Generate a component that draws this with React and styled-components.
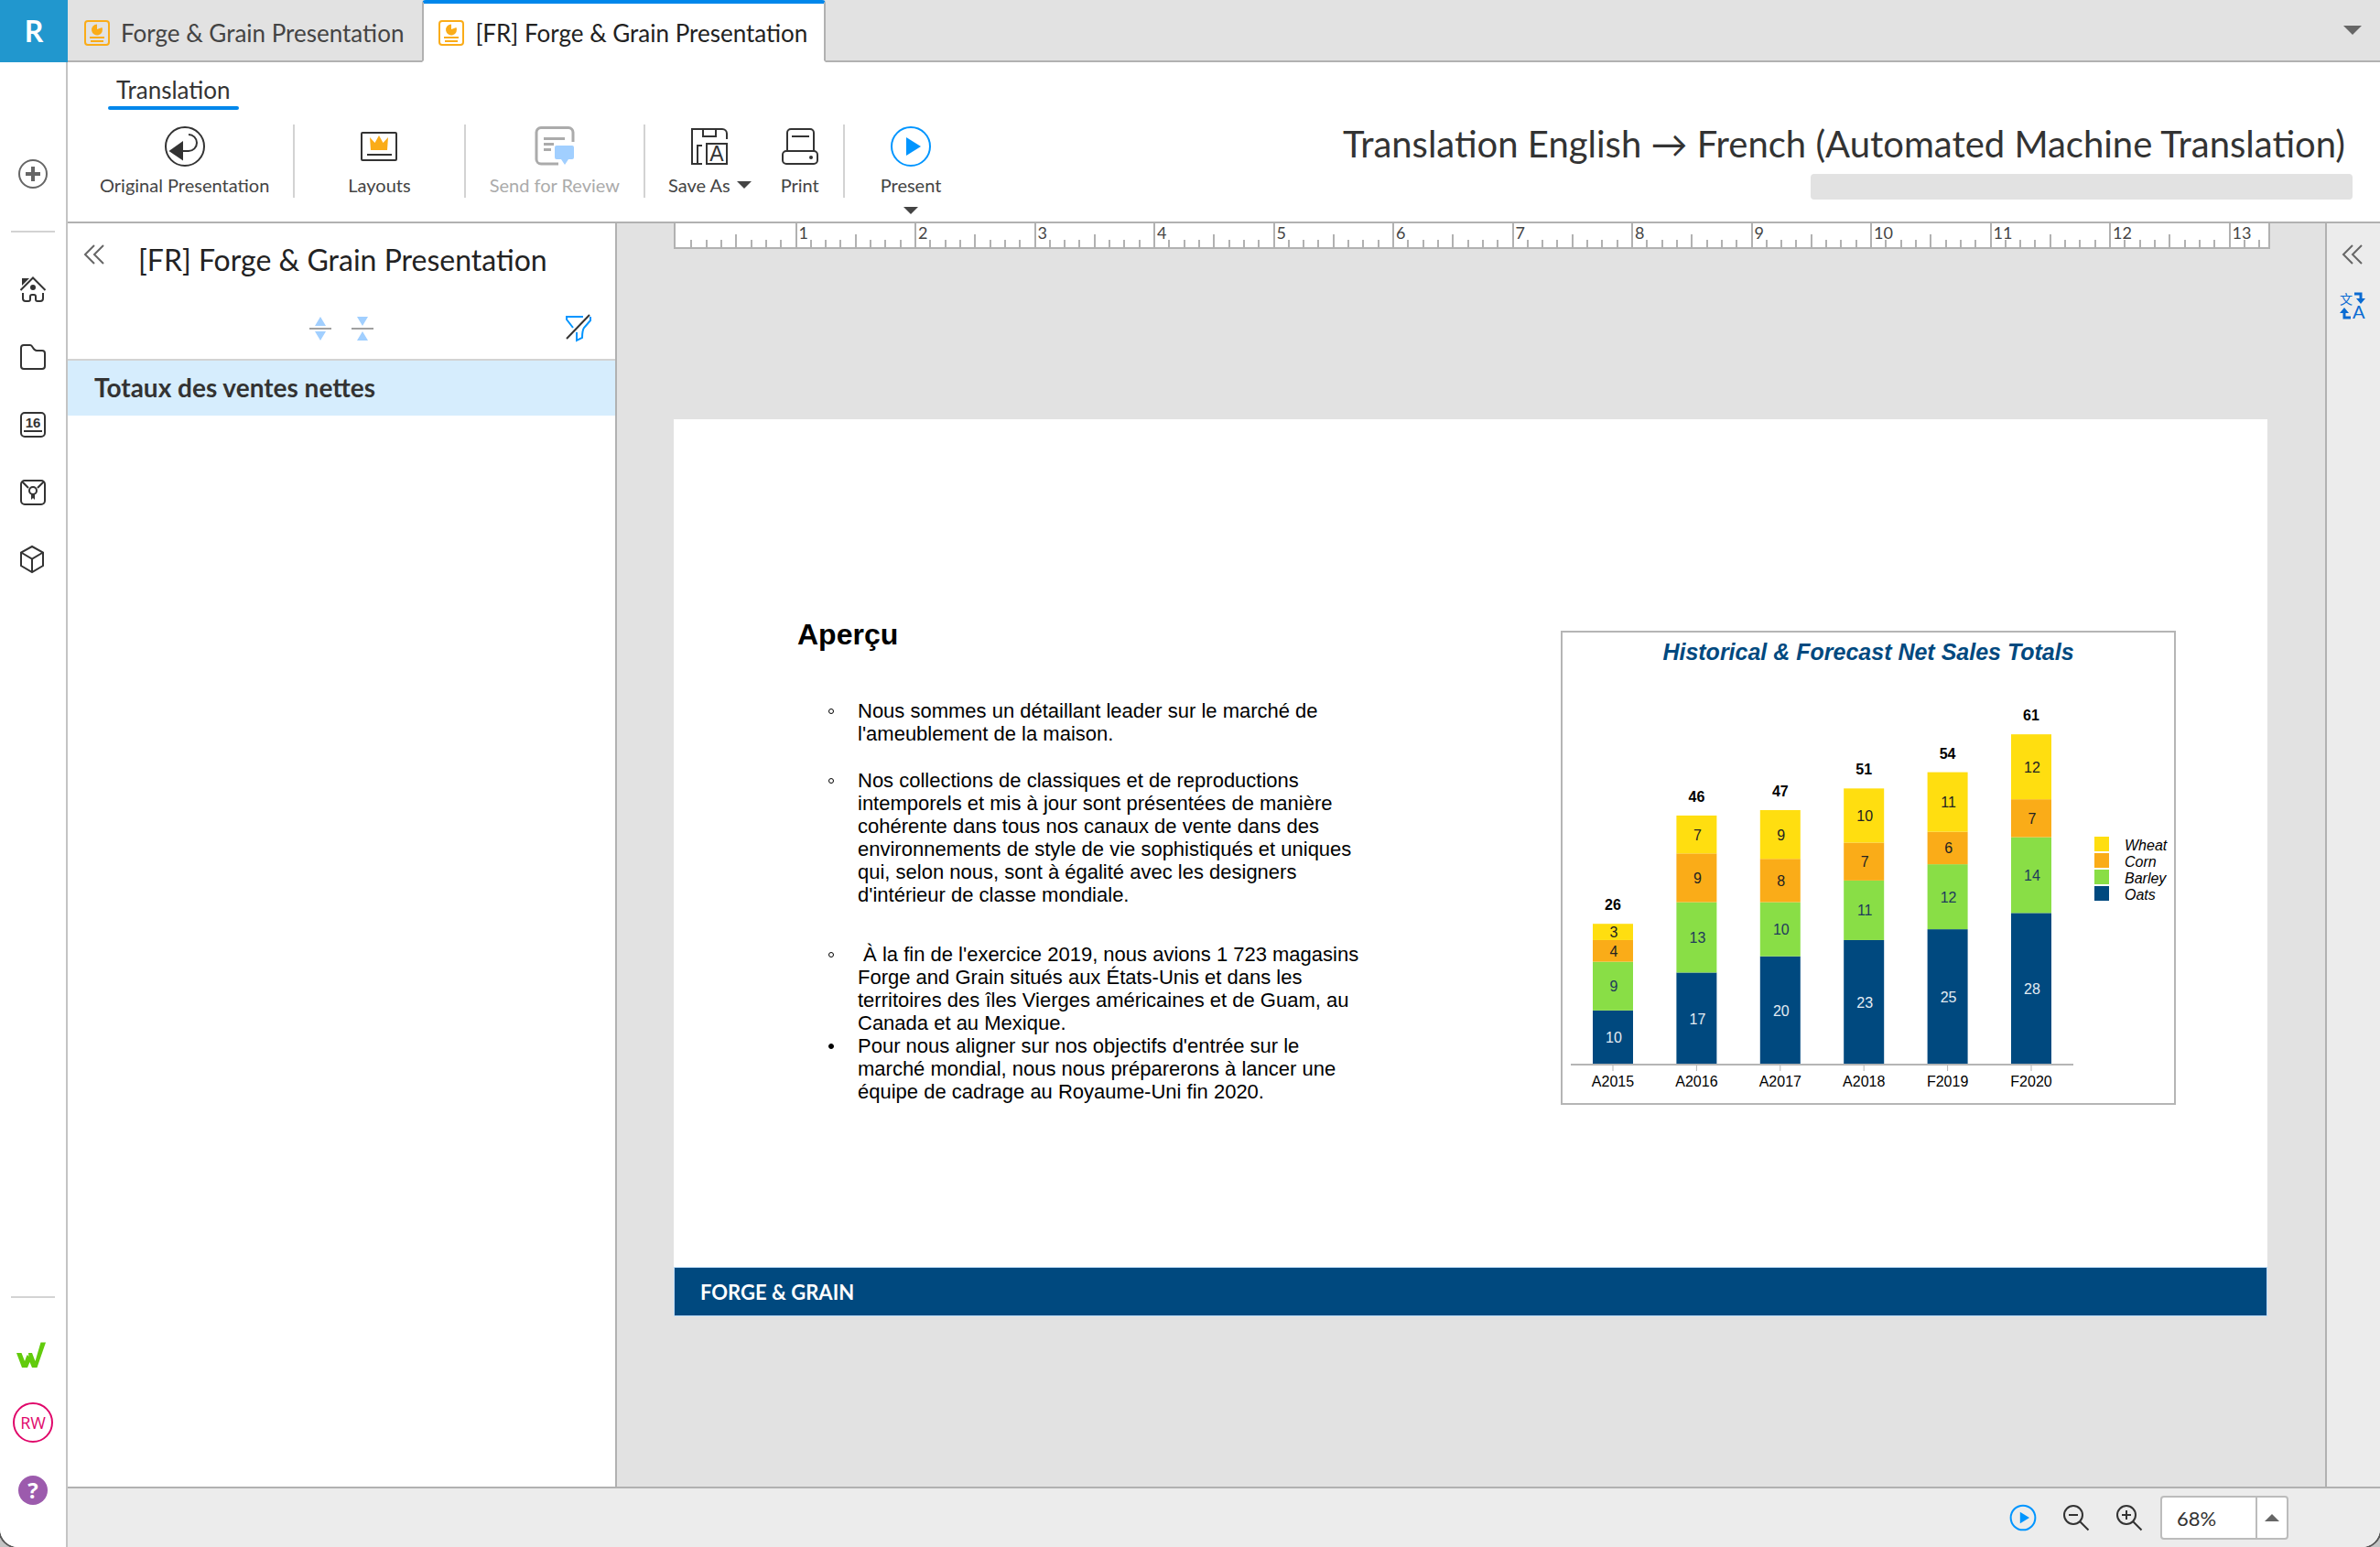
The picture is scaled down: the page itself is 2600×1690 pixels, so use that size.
import React, { useState } from "react";
import styled, { createGlobalStyle } from "styled-components";

const GlobalStyle = createGlobalStyle`
  *, *::before, *::after {
    box-sizing: border-box;
  }
  body {
    margin: 0;
    background: #c4c4c4;
    color: #333;
    font-family: Lato, "Liberation Sans", sans-serif;
  }
  button, input {
    font: inherit;
    color: inherit;
  }
  h1, h2, p, ul, figure {
    margin: 0;
    padding: 0;
  }
  svg {
    display: block;
    flex: none;
    overflow: visible;
  }
`;

/* ---------- icons ---------- */

const Icon = ({ w, h = w, stroke = "#333", sw = 2, children }) => (
  <svg
    width={w}
    height={h}
    viewBox={`0 0 ${w} ${h}`}
    fill="none"
    stroke={stroke}
    strokeWidth={sw}
    aria-hidden="true"
  >
    {children}
  </svg>
);

const PresentationIcon = () => (
  <Icon w={28} stroke="#faac18">
    <rect x="1" y="1" width="26" height="26" rx="3" />
    <path d="M14 4.500V10l5.500-2a6 6 0 1 1-5.500-3.500z" fill="#faac18" stroke="none" />
    <path d="M6 19h16M7 23h14" />
  </Icon>
);

const Caret = ({ w = 16, h = 8, up, fill = "#444" }) => (
  <Icon w={w} h={h} stroke="none">
    <path d={up ? `M0 ${h}H${w}L${w / 2} 0z` : `M0 0H${w}L${w / 2} ${h}z`} fill={fill} />
  </Icon>
);

const ChevronsLeft = () => (
  <Icon w={24} h={22} stroke="#666">
    <path d="M12 1L2 11l10 10M22 1L12 11l10 10" />
  </Icon>
);

const AddIcon = () => (
  <Icon w={32} stroke="#666">
    <circle cx="16" cy="16" r="15" />
    <path d="M16 8v16M8 16h16" strokeWidth="4" />
  </Icon>
);

const HomeIcon = () => (
  <Icon w={28}>
    <path d="M.5 15L14 1.500 27.500 15" />
    <path d="M2 2h8l-8 8z" fill="#333" stroke="none" />
    <circle cx="14" cy="12" r="3" fill="#333" stroke="none" />
    <path d="M3 18v6a3 3 0 0 0 3 3h3a2 2 0 0 0 2-2v-3a2 2 0 0 1 2-2h2a2 2 0 0 1 2 2v3a2 2 0 0 0 2 2h3a3 3 0 0 0 3-3v-6" />
  </Icon>
);

const FolderIcon = () => (
  <Icon w={28}>
    <path d="M1 4a3 3 0 0 1 3-3h7c3 0 3 6 7 6h6a3 3 0 0 1 3 3v14a3 3 0 0 1-3 3H4a3 3 0 0 1-3-3z" />
  </Icon>
);

const CalendarIcon = () => (
  <Icon w={28}>
    <rect x="1" y="1" width="26" height="26" rx="4" />
    <text
      x="14"
      y="17"
      textAnchor="middle"
      fill="#333"
      stroke="none"
      fontFamily="Liberation Sans, sans-serif"
      fontWeight="700"
      fontSize="15"
    >
      16
    </text>
    <path d="M4 21h20" />
  </Icon>
);

const CertificateIcon = () => (
  <Icon w={28}>
    <rect x="1" y="1" width="26" height="26" rx="4" />
    <path d="M2 2l7 7M26 2l-7 7" />
    <circle cx="14" cy="12" r="4" />
    <path d="M12 16h4v6l-2-2-2 2z" fill="#333" stroke="none" />
  </Icon>
);

const CubeIcon = () => (
  <Icon w={28}>
    <path d="M13-1l12 6.500v14.500L13 27 1 20V5.500zM1 5.500L13 12.500l12-7M13 12.500V27" />
  </Icon>
);

const WLogo = () => (
  <Icon w={36} h={28} stroke="none">
    <path
      d="M0 12H5.500L9 21l2-5.500 1-1.500 1.500 2-.5-4H17l3.500 9L26.500.5H32L22.500 28H17l-2.500-6-2.500 6H6z"
      fill="#62cb0c"
    />
  </Icon>
);

const OriginalIcon = () => (
  <Icon w={44}>
    <circle cx="22" cy="22" r="21" />
    <path d="M26 9a9 9 0 0 1 0 18h-7" />
    <path d="M4.500 27L20 16v21.500z" fill="#333" stroke="none" />
  </Icon>
);

const LayoutsIcon = () => (
  <Icon w={44}>
    <rect x="3" y="7" width="38" height="30" rx="1" />
    <path d="M12 12l5.500 6L22 10l4.500 8 5.500-6-1 14H13z" fill="#faac18" stroke="none" />
    <path d="M9 31h27" />
  </Icon>
);

const ReviewIcon = () => (
  <Icon w={44} stroke="#ababab" sw={3}>
    <path d="M26 41H7a5 5 0 0 1-5-5V6.500a5 5 0 0 1 5-5h30a5 5 0 0 1 5 5V17" />
    <path d="M10 13.500h23M10 19.500h11M10 25.500h8" />
    <path
      d="M24 21h17a2 2 0 0 1 2 2v11a2 2 0 0 1-2 2h-4l-4 6-4-6h-5a2 2 0 0 1-2-2V23a2 2 0 0 1 2-2z"
      fill="#a1cfff"
      stroke="none"
    />
  </Icon>
);

const SaveAsIcon = () => (
  <Icon w={44}>
    <g transform="translate(2 2)">
      <path d="M12 39H1V1h33a5 5 0 0 1 5 5v6M13 1v8h14V1M12 19H7v20" />
      <rect x="17" y="17" width="22" height="22" />
      <text
        x="28"
        y="36"
        textAnchor="middle"
        fill="#333"
        stroke="none"
        fontFamily="Liberation Sans, sans-serif"
        fontSize="23"
      >
        A
      </text>
    </g>
  </Icon>
);

const PrintIcon = () => (
  <Icon w={44}>
    <g transform="translate(2 2)">
      <path d="M6 25V5a4 4 0 0 1 4-4h21a4 4 0 0 1 4 4v20M11 9h19" />
      <rect x="1" y="25" width="38" height="14" rx="4" />
      <circle cx="32" cy="32" r="2" fill="#333" stroke="none" />
    </g>
  </Icon>
);

const PlayIcon = ({ size = 44 }) => (
  <svg width={size} height={size} viewBox="0 0 44 44" fill="none" aria-hidden="true">
    <circle cx="22" cy="22" r="21" stroke="#0095ff" strokeWidth={88 / size} />
    <path d="M17 12l16 10-16 10z" fill="#0095ff" />
  </svg>
);

const SpreadIcon = ({ collapse }) => (
  <Icon w={24} h={26} stroke="#a0a0a0">
    <path d="M0 13h24" />
    <path
      d={collapse ? "M6 0h12l-6 10zM6 26h12l-6-10z" : "M6 10h12L12 0zM6 16h12l-6 10z"}
      fill="#a1cfff"
      stroke="none"
    />
  </Icon>
);

const FilterOffIcon = () => (
  <Icon w={30} stroke="#0095ff">
    <path d="M20 2H2v3l7 9M28 2v4l-7 8c-2 3-2 5-2 11l-6 3v-9" />
    <path d="M2 26L27 0" stroke="#333" />
  </Icon>
);

const TranslateIcon = () => (
  <Icon w={28} stroke="#0a6bd2">
    <text
      x="0"
      y="12"
      fontFamily="Noto Sans CJK SC, sans-serif"
      fontSize="14"
      fill="#0a6bd2"
      stroke="none"
    >
      文
    </text>
    <text
      x="14"
      y="28"
      fontFamily="Lato, sans-serif"
      fontSize="20"
      fill="#0a6bd2"
      stroke="none"
    >
      A
    </text>
    <path d="M16 1h7v6M12 27H5v-6" strokeWidth="3" />
    <path d="M18 6h10l-5 6zM0 22h10l-5-6z" fill="#0a6bd2" stroke="none" />
  </Icon>
);

const ZoomIcon = ({ plus }) => (
  <Icon w={28}>
    <circle cx="11" cy="11" r="10" />
    <path d="M18 18l9.500 9.500M6 11h10" />
    {plus && <path d="M11 6v10" />}
  </Icon>
);

/* ---------- data ---------- */

const bullets = [
  {
    hollow: true,
    lines: ["Nous sommes un détaillant leader sur le marché de", "l'ameublement de la maison."],
    after: 26,
  },
  {
    hollow: true,
    lines: [
      "Nos collections de classiques et de reproductions",
      "intemporels et mis à jour sont présentées de manière",
      "cohérente dans tous nos canaux de vente dans des",
      "environnements de style de vie sophistiqués et uniques",
      "qui, selon nous, sont à égalité avec les designers",
      "d'intérieur de classe mondiale.",
    ],
    after: 40,
  },
  {
    hollow: true,
    lines: [
      "\u00a0À la fin de l'exercice 2019, nous avions 1 723 magasins",
      "Forge and Grain situés aux États-Unis et dans les",
      "territoires des îles Vierges américaines et de Guam, au",
      "Canada et au Mexique.",
    ],
    after: 0,
  },
  {
    hollow: false,
    lines: [
      "Pour nous aligner sur nos objectifs d'entrée sur le",
      "marché mondial, nous nous préparerons à lancer une",
      "équipe de cadrage au Royaume-Uni fin 2020.",
    ],
    after: 0,
  },
];

const series = [
  { name: "Oats", color: "#00497f", label: "#e4ecf3" },
  { name: "Barley", color: "#89de46", label: "#1f3a5c" },
  { name: "Corn", color: "#faac18", label: "#222" },
  { name: "Wheat", color: "#ffde10", label: "#222" },
];

const sales = [
  { year: "A2015", values: [10, 9, 4, 3] },
  { year: "A2016", values: [17, 13, 9, 7] },
  { year: "A2017", values: [20, 10, 8, 9] },
  { year: "A2018", values: [23, 11, 7, 10] },
  { year: "F2019", values: [25, 12, 6, 11] },
  { year: "F2020", values: [28, 14, 7, 12] },
];

const BASE = 474;
const UNIT = 5.915;

const SalesChart = () => (
  <ChartSvg viewBox="0 0 672 518" role="img" aria-label="Historical & Forecast Net Sales Totals">
    <rect x="1" y="1" width="670" height="516" fill="#fff" stroke="#b5b5b5" strokeWidth="2" />
    <text className="title" x="336" y="32">
      Historical &amp; Forecast Net Sales Totals
    </text>
    {sales.map(({ year, values }, i) => {
      const cx = 57 + i * 91.4;
      const total = values.reduce((a, b) => a + b, 0);
      let sum = 0;
      return (
        <g key={year}>
          {values.map((v, s) => {
            sum += v;
            const y = BASE - sum * UNIT;
            return (
              <g key={series[s].name}>
                <rect x={cx - 22} y={y} width="44" height={v * UNIT} fill={series[s].color} />
                <text x={cx + 1} y={y + (v * UNIT) / 2 + 6} fill={series[s].label}>
                  {v}
                </text>
              </g>
            );
          })}
          <text className="total" x={cx} y={BASE - total * UNIT - 15}>
            {total}
          </text>
          <path d={`M${cx} ${BASE}v7`} stroke="#b5b5b5" strokeWidth="1" />
          <text x={cx} y="498">
            {year}
          </text>
        </g>
      );
    })}
    <path d={`M11 ${BASE}H560`} stroke="#b5b5b5" strokeWidth="2" />
    {[...series].reverse().map((s, i) => (
      <g key={s.name}>
        <rect x="583" y={225 + i * 18} width="16" height="16" fill={s.color} />
        <text className="legend" x="616" y={240 + i * 18}>
          {s.name}
        </text>
      </g>
    ))}
  </ChartSvg>
);

// thirteen full inches and the first third of the fourteenth
const Ruler = () => (
  <RulerBar>
    {Array.from({ length: 14 }, (_, n) => {
      const last = n === 13;
      return (
        <Inch key={n} $grow={last ? 8 : 24}>
          <Ticks>
            {Array.from({ length: last ? 3 : 8 }, (_, t) => (
              <Tick
                key={t}
                $grow={last && t === 2 ? 2 : 3}
                $h={t === 0 ? (n === 0 ? 0 : 26) : t === 4 ? 14 : 8}
              />
            ))}
          </Ticks>
          {n > 0 && <InchLabel>{n}</InchLabel>}
        </Inch>
      );
    })}
  </RulerBar>
);

const App = () => {
  const [zoom, setZoom] = useState("68%");

  return (
    <>
      <GlobalStyle />
      <Window>
        <Sidebar>
          <Brand>R</Brand>
          <AddButton aria-label="Create">
            <AddIcon />
          </AddButton>
          <SideRule />
          <SideNav>
            <PlainButton aria-label="Home"><HomeIcon /></PlainButton>
            <PlainButton aria-label="Files"><FolderIcon /></PlainButton>
            <PlainButton aria-label="Calendar"><CalendarIcon /></PlainButton>
            <PlainButton aria-label="Certifications"><CertificateIcon /></PlainButton>
            <PlainButton aria-label="Data"><CubeIcon /></PlainButton>
          </SideNav>
          <Spacer />
          <SideRule />
          <SideFooter>
            <WLogo />
            <Avatar aria-label="Account">RW</Avatar>
            <Help aria-label="Help">?</Help>
          </SideFooter>
        </Sidebar>

        <Main>
          <TabStrip>
            <Tab>
              <PresentationIcon />
              Forge &amp; Grain Presentation
            </Tab>
            <Tab $active>
              <PresentationIcon />
              [FR] Forge &amp; Grain Presentation
            </Tab>
            <TabMenu aria-label="All tabs">
              <Caret w={20} h={10} fill="#666" />
            </TabMenu>
          </TabStrip>

          <Ribbon>
            <div>
              <RibbonTab>Translation</RibbonTab>
              <Toolbar>
                <ToolGroup $pad={26}>
                  <ToolButton>
                    <OriginalIcon />
                    Original Presentation
                  </ToolButton>
                </ToolGroup>
                <ToolGroup $pad={58}>
                  <ToolButton>
                    <LayoutsIcon />
                    Layouts
                  </ToolButton>
                </ToolGroup>
                <ToolGroup $pad={26}>
                  <ToolButton disabled>
                    <ReviewIcon />
                    Send for Review
                  </ToolButton>
                </ToolGroup>
                <ToolGroup $pad={25}>
                  <ToolButton>
                    <SaveAsIcon />
                    <LabelRow>
                      Save As <Caret />
                    </LabelRow>
                  </ToolButton>
                  <ToolButton>
                    <PrintIcon />
                    Print
                  </ToolButton>
                </ToolGroup>
                <ToolGroup $pad={39} $last>
                  <ToolButton>
                    <PlayIcon />
                    Present
                    <CaretBelow>
                      <Caret />
                    </CaretBelow>
                  </ToolButton>
                </ToolGroup>
              </Toolbar>
            </div>
            <RibbonTitle>
              <h1>Translation English → French (Automated Machine Translation)</h1>
              <Placeholder />
            </RibbonTitle>
          </Ribbon>

          <Workspace>
            <Outline>
              <OutlineHead>
                <PlainButton aria-label="Collapse outline"><ChevronsLeft /></PlainButton>
                <h2>[FR] Forge &amp; Grain Presentation</h2>
              </OutlineHead>
              <OutlineTools>
                <PlainButton aria-label="Expand all"><SpreadIcon /></PlainButton>
                <PlainButton aria-label="Collapse all"><SpreadIcon collapse /></PlainButton>
                <FilterButton aria-label="Clear filter"><FilterOffIcon /></FilterButton>
              </OutlineTools>
              <OutlineRow>Totaux des ventes nettes</OutlineRow>
            </Outline>

            <Canvas>
              <Ruler />
              <Stage>
                <Slide>
                  <SlideBody>
                    <SlideText>
                      <h2>Aperçu</h2>
                      <ul>
                        {bullets.map((b) => (
                          <Bullet key={b.lines[0]} $hollow={b.hollow} $after={b.after}>
                            <div>
                              {b.lines.map((line) => (
                                <p key={line}>{line}</p>
                              ))}
                            </div>
                          </Bullet>
                        ))}
                      </ul>
                    </SlideText>
                    <SalesChart />
                  </SlideBody>
                  <SlideFooter>FORGE &amp; GRAIN</SlideFooter>
                </Slide>
              </Stage>
            </Canvas>

            <Rail>
              <PlainButton aria-label="Expand panel"><ChevronsLeft /></PlainButton>
              <PlainButton aria-label="Translation"><TranslateIcon /></PlainButton>
            </Rail>
          </Workspace>

          <StatusBar>
            <PlainButton aria-label="Present"><PlayIcon size={28} /></PlainButton>
            <PlainButton aria-label="Zoom out"><ZoomIcon /></PlainButton>
            <PlainButton aria-label="Zoom in"><ZoomIcon plus /></PlainButton>
            <ZoomBox>
              <input aria-label="Zoom" value={zoom} onChange={(e) => setZoom(e.target.value)} />
              <button aria-label="Zoom levels"><Caret up fill="#666" /></button>
            </ZoomBox>
          </StatusBar>
        </Main>
      </Window>
    </>
  );
};

export default App;

/* ---------- frame ---------- */

const Window = styled.div`
  display: flex;
  min-height: 100vh;
  background: #fff;
  border-radius: 0 0 20px 20px;
  box-shadow: 0 0 0 2px #555;
  overflow: hidden;
`;

const PlainButton = styled.button`
  display: flex;
  padding: 0;
  border: 0;
  background: none;
  cursor: pointer;
`;

const Spacer = styled.div`
  flex: 1;
`;

const Sidebar = styled.nav`
  display: flex;
  flex-direction: column;
  align-items: center;
  flex: none;
  width: 74px;
  border-right: 2px solid #c4c4c4;
  background: #fff;
`;

const Brand = styled.div`
  align-self: flex-start;
  width: 74px;
  height: 68px;
  margin-right: -2px;
  background: #2197ce;
  color: #fff;
  font-size: 32px;
  font-weight: 700;
  line-height: 68px;
  text-align: center;
`;

const AddButton = styled(PlainButton)`
  margin: 106px 0 46px;
`;

const SideRule = styled.div`
  width: 48px;
  height: 2px;
  background: #d3d3d3;
`;

const SideNav = styled.div`
  display: flex;
  flex-direction: column;
  align-items: center;
  gap: 46px;
  padding-top: 48px;
`;

const SideFooter = styled.div`
  display: flex;
  flex-direction: column;
  align-items: center;
  padding: 48px 0 46px;
`;

const Avatar = styled(PlainButton)`
  justify-content: center;
  align-items: center;
  width: 44px;
  height: 44px;
  margin: 38px 0 36px;
  border: 2px solid #e0066a;
  border-radius: 50%;
  color: #e0066a;
  font-family: "Open Sans", sans-serif;
  font-size: 18px;
`;

const Help = styled(PlainButton)`
  justify-content: center;
  align-items: center;
  width: 32px;
  height: 32px;
  border-radius: 50%;
  background: #9c5bad;
  color: #fff;
  font-family: "Open Sans", sans-serif;
  font-size: 24px;
  font-weight: 700;
  line-height: 32px;
`;

const Main = styled.div`
  display: flex;
  flex-direction: column;
  flex: 1;
  min-width: 0;
`;

/* ---------- tabs and ribbon ---------- */

const TabStrip = styled.div`
  display: flex;
  height: 68px;
  background: #e2e2e2;
`;

const Tab = styled.button`
  display: flex;
  align-items: center;
  gap: 12px;
  padding: ${(p) => (p.$active ? "2px 18px 0 16px" : "6px 20px 0 18px")};
  border: 0;
  background: ${(p) => (p.$active ? "#fff" : "#e2e2e2")};
  border-bottom: 2px solid ${(p) => (p.$active ? "#fff" : "#b1b1b1")};
  color: ${(p) => (p.$active ? "#222" : "#444")};
  font-size: 26px;
  line-height: 32px;
  white-space: nowrap;
  ${(p) =>
    p.$active &&
    `
    border-top: 4px solid #0087eb;
    border-left: 2px solid #b1b1b1;
    border-right: 2px solid #b1b1b1;
    border-radius: 4px 4px 0 0;
  `}
`;

const TabMenu = styled.button`
  display: flex;
  justify-content: flex-end;
  align-items: center;
  flex: 1;
  padding: 0 20px 0 0;
  border: 0;
  border-bottom: 2px solid #b1b1b1;
  background: none;
`;

const Ribbon = styled.header`
  display: flex;
  justify-content: space-between;
  height: 176px;
  border-bottom: 2px solid #b1b1b1;
  background: #fff;
`;

const RibbonTab = styled.button`
  display: block;
  margin: 14px 0 16px 44px;
  padding: 0 9px 2px;
  border: 0;
  background: none;
  font-size: 26px;
  line-height: 32px;

  &::after {
    content: "";
    display: block;
    height: 4px;
    margin: 2px -9px -2px;
    border-radius: 2px;
    background: #0087eb;
  }
`;

const Toolbar = styled.div`
  display: flex;
  padding-left: 9px;
`;

const ToolGroup = styled.div`
  display: flex;
  gap: 31px;
  height: 80px;
  padding: 2px ${(p) => p.$pad}px 0;
  border-right: ${(p) => (p.$last ? 0 : 2)}px solid #d3d3d3;
`;

const ToolButton = styled.button`
  display: flex;
  flex-direction: column;
  align-items: center;
  gap: 8px;
  padding: 0;
  border: 0;
  background: none;
  color: #444;
  font-size: 20px;
  line-height: 24px;
  white-space: nowrap;

  &:disabled {
    color: #ababab;
  }
`;

const LabelRow = styled.span`
  display: flex;
  align-items: center;
  gap: 7px;
`;

const CaretBelow = styled.span`
  padding-top: 4px;
`;

const RibbonTitle = styled.div`
  display: flex;
  flex-direction: column;
  align-items: flex-end;
  gap: 9px;
  padding: 65px 30px 0 0;

  h1 {
    margin-right: 8px;
    font-size: 40px;
    font-weight: 400;
    line-height: 48px;
    white-space: nowrap;
  }
`;

const Placeholder = styled.div`
  width: 592px;
  height: 28px;
  border-radius: 4px;
  background: #e2e2e2;
`;

/* ---------- workspace ---------- */

const Workspace = styled.div`
  display: flex;
  flex: 1;
`;

const Outline = styled.aside`
  flex: none;
  width: 600px;
  border-right: 2px solid #b1b1b1;
`;

const OutlineHead = styled.div`
  display: flex;
  align-items: flex-start;
  gap: 36px;
  padding: 23px 0 0 17px;

  h2 {
    color: #222;
    font-size: 32px;
    font-weight: 400;
    line-height: 34px;
    white-space: nowrap;
  }
`;

const OutlineTools = styled.div`
  display: flex;
  align-items: center;
  gap: 22px;
  height: 93px;
  padding: 24px 25px 0 264px;
  border-bottom: 2px solid #d3d3d3;
`;

const FilterButton = styled(PlainButton)`
  margin-left: auto;
`;

const OutlineRow = styled.button`
  display: block;
  width: 100%;
  height: 60px;
  padding: 0 0 2px 29px;
  border: 0;
  background: #d6edfd;
  font-size: 28px;
  font-weight: 700;
  text-align: left;
`;

const Canvas = styled.main`
  display: flex;
  flex-direction: column;
  flex: 1;
  min-width: 0;
  padding: 0 60px 0 62px;
  background: #e2e2e2;
`;

const RulerBar = styled.div`
  display: flex;
  height: 28px;
  border: 2px solid #b1b1b1;
  border-top: 0;
  background: #fff;
`;

const Inch = styled.div`
  display: grid;
  flex: ${(p) => p.$grow} 1 0;
  min-width: 0;

  & > * {
    grid-area: 1 / 1;
    min-width: 0;
  }
`;

const Ticks = styled.div`
  display: flex;
  align-items: flex-end;
`;

const Tick = styled.div`
  flex: ${(p) => p.$grow} 1 0;
  height: ${(p) => p.$h}px;
  border-left: 2px solid #b1b1b1;
`;

const InchLabel = styled.span`
  padding-left: 4px;
  color: #444;
  font-size: 18px;
  line-height: 20px;
`;

const Stage = styled.div`
  display: flex;
  flex-direction: column;
  justify-content: center;
  flex: 1;
  padding-right: 3px;
`;

const Slide = styled.section`
  display: flex;
  flex-direction: column;
  aspect-ratio: 16 / 9;
  background: #fff;
  color: #000;
`;

const SlideBody = styled.div`
  display: flex;
  justify-content: space-between;
  align-items: flex-start;
  flex: 1;
  padding: 217px 100px 0 135px;
  font-family: "Liberation Sans", Arial, sans-serif;

  h2 {
    font-size: 32px;
    line-height: 36px;
  }
  ul {
    padding: 53px 0 0 34px;
    list-style: none;
  }
`;

const SlideText = styled.div`
  font-size: 22px;
  line-height: 25px;
  white-space: nowrap;
`;

const Bullet = styled.li`
  display: flex;
  gap: 26px;
  padding-bottom: ${(p) => p.$after}px;

  &::before {
    content: "";
    flex: none;
    width: 6px;
    height: 6px;
    margin-top: 10px;
    border: 1px solid #000;
    border-radius: 50%;
    background: ${(p) => (p.$hollow ? "none" : "#000")};
  }
`;

const ChartSvg = styled.svg`
  width: 672px;
  margin-top: 14px;

  text {
    font-size: 16px;
    text-anchor: middle;
  }
  .title {
    fill: #00497f;
    font-size: 25px;
    font-style: italic;
    font-weight: 700;
  }
  .total {
    font-weight: 700;
  }
  .legend {
    font-style: italic;
    text-anchor: start;
  }
`;

const SlideFooter = styled.footer`
  height: 54px;
  padding-left: 28px;
  border: 1px solid #bcdcf7;
  background: #00497f;
  color: #fff;
  font-size: 22px;
  font-weight: 700;
  line-height: 54px;
`;

const Rail = styled.aside`
  display: flex;
  flex-direction: column;
  align-items: center;
  gap: 31px;
  flex: none;
  width: 60px;
  padding: 23px 2px 0 0;
  border-left: 2px solid #b1b1b1;
  background: #ececec;
`;

const StatusBar = styled.footer`
  display: flex;
  justify-content: flex-end;
  align-items: center;
  gap: 30px;
  height: 66px;
  padding-right: 100px;
  border-top: 2px solid #b1b1b1;
  background: #ececec;
`;

const ZoomBox = styled.div`
  display: flex;
  width: 140px;
  height: 48px;
  margin-left: -10px;
  border: 2px solid #bcbcbc;
  border-radius: 4px;
  background: #fff;

  input {
    flex: 1;
    min-width: 0;
    padding: 0 0 0 16px;
    border: 0;
    background: none;
    font-size: 22px;
  }
  button {
    display: flex;
    justify-content: center;
    align-items: center;
    width: 34px;
    padding: 0;
    border: 0;
    border-left: 2px solid #bcbcbc;
    background: none;
  }
`;
